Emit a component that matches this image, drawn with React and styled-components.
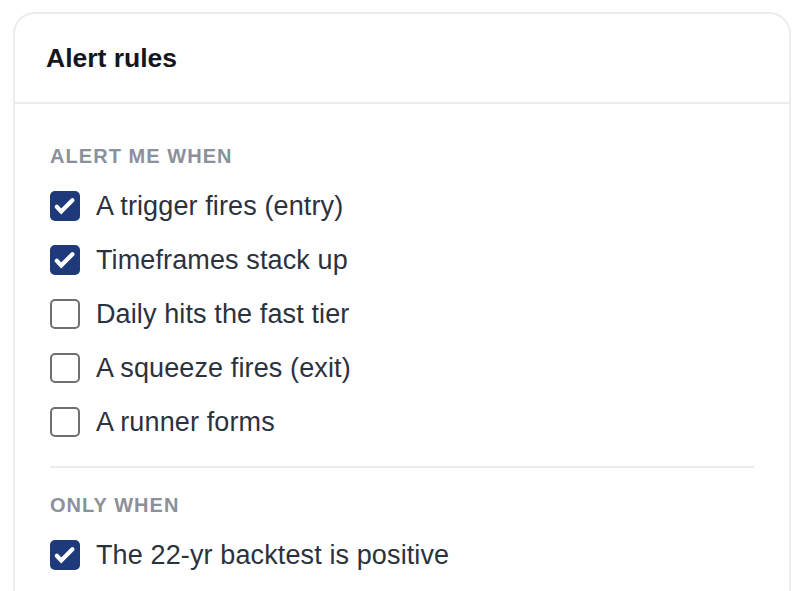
import React from "react";
import styled, { createGlobalStyle } from "styled-components";

const Global = createGlobalStyle`
  html, body { margin: 0; padding: 0; background: #ffffff; }
  body { font-family: "Liberation Sans", Arial, sans-serif; overflow: hidden; }
`;

const Page = styled.div`
  padding: 12px 13px 0 13px;
  height: 591px;
  box-sizing: border-box;
  overflow: hidden;
`;

const Card = styled.section`
  border: 2px solid #ebebf0;
  border-radius: 22px;
  background: #fff;
  height: 640px;
  box-sizing: border-box;
`;

const Header = styled.header`
  height: 88px;
  display: flex;
  align-items: center;
  padding: 0 31px;
  border-bottom: 2px solid #ebebf0;
`;

const Title = styled.h2`
  margin: 0;
  font-size: 26.5px;
  font-weight: 700;
  color: #14161c;
`;

const Body = styled.div`
  padding: 40px 35px 0 35px;
  display: flex;
  flex-direction: column;
`;

const SectionLabel = styled.div`
  font-size: 20px;
  line-height: 24px;
  font-weight: 700;
  color: #8b919b;
  letter-spacing: 1.05px;
  text-transform: uppercase;
  margin-bottom: 21px;
`;

const List = styled.div`
  display: flex;
  flex-direction: column;
  gap: 20px;
`;

const Row = styled.label`
  display: flex;
  align-items: center;
  gap: 16px;
  height: 34px;
  font-size: 27px;
  letter-spacing: 0.12px;
  color: #2c323d;
  cursor: pointer;
`;

const Box = styled.span`
  width: 30px;
  height: 30px;
  box-sizing: border-box;
  border-radius: 5px;
  flex: 0 0 30px;
  display: flex;
  align-items: center;
  justify-content: center;
  background: ${(p) => (p.$checked ? "#1e3a7a" : "#fff")};
  border: ${(p) => (p.$checked ? "none" : "2px solid #707074")};
`;

const Divider = styled.hr`
  border: none;
  border-top: 2px solid #ececf0;
  margin: 27px 0 25px 0;
`;

const Footer = styled.div`
  display: flex;
  justify-content: flex-end;
  margin-top: 19px;
  padding-right: 10px;
`;

const GhostButton = styled.div`
  width: 206px;
  height: 44px;
  border: 2px solid #e8e8ee;
  border-radius: 10px;
  box-sizing: border-box;
`;

const Check = () => (
  <svg width="30" height="30" viewBox="0 0 30 30" fill="none">
    <path d="M6.8 15.8 L11.2 20.4 L22.4 9.2" stroke="#fff" strokeWidth="4.2" strokeLinecap="round" strokeLinejoin="miter" />
  </svg>
);

const CheckRow = ({ checked, children }) => (
  <Row>
    <Box $checked={checked}>{checked && <Check />}</Box>
    <span>{children}</span>
  </Row>
);

const alerts = [
  { label: "A trigger fires (entry)", checked: true },
  { label: "Timeframes stack up", checked: true },
  { label: "Daily hits the fast tier", checked: false },
  { label: "A squeeze fires (exit)", checked: false },
  { label: "A runner forms", checked: false },
];

export default function App() {
  return (
    <>
      <Global />
      <Page>
        <Card>
          <Header>
            <Title>Alert rules</Title>
          </Header>
          <Body>
            <SectionLabel>Alert me when</SectionLabel>
            <List>
              {alerts.map((a) => (
                <CheckRow key={a.label} checked={a.checked}>{a.label}</CheckRow>
              ))}
            </List>
            <Divider />
            <SectionLabel>Only when</SectionLabel>
            <List>
              <CheckRow checked>The 22-yr backtest is positive</CheckRow>
            </List>
            <Footer>
              <GhostButton />
            </Footer>
          </Body>
        </Card>
      </Page>
    </>
  );
}
